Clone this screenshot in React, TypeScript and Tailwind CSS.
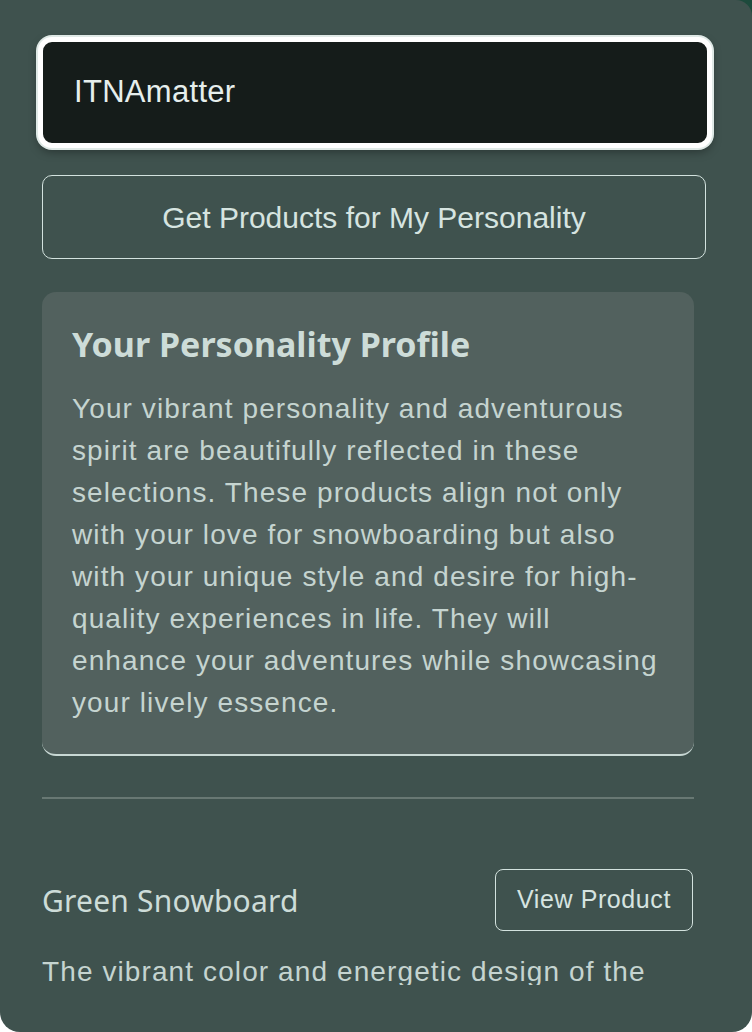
import React from "react";

export default function App() {
  const body = "font-['Liberation_Sans',Arial,sans-serif]";
  return (
    <div className="relative w-[752px] h-[1032px] bg-white overflow-hidden">
      <div className="absolute top-0 right-0 w-8 h-8 bg-[#1d4a3c]" />
      <div className="relative h-[1032px] bg-[#3f524e] rounded-tr-[16px] rounded-b-[20px] overflow-hidden pl-[42px] pt-[37px]">
        <div className="-ml-[4px] w-[674px] h-[111px] rounded-[14px] border-[5px] border-white bg-[#151c1a] shadow-[0_0_0_2px_#dfe9e6,0_4px_10px_rgba(0,0,0,0.35)] flex items-center pl-[31px]">
          <span className={`${body} text-[31px] text-[#e6eeec] tracking-[0.3px]`}>ITNAmatter</span>
        </div>
        <button className={`${body} mt-[27px] w-[664px] h-[84px] rounded-[10px] border-[1.5px] border-[#d3e2de] text-[30px] text-[#d6e4e0] flex items-center justify-center`}>
          Get Products for My Personality
        </button>
        <div className="w-[652px] h-[726px] overflow-hidden">
          <div className="mt-[33px] rounded-[14px] bg-[#52615e] border-b-2 border-[#c8d8d4] px-[30px] pt-[32px] pb-[30px]">
            <h2 className="font-['Noto_Sans',sans-serif] font-bold text-[34px] leading-[40px] text-[#cddcd8]">
              Your Personality Profile
            </h2>
            <p className={`${body} mt-[24px] text-[28px] leading-[42px] text-[#c5d4d0] tracking-[1.1px]`}>
              Your vibrant personality and adventurous spirit are beautifully reflected in these selections. These products align not only with your love for snowboarding but also with your unique style and desire for high-quality experiences in life. They will enhance your adventures while showcasing your lively essence.
            </p>
          </div>
          <div className="mt-[41px] h-[2px] bg-[#687873]" />
          <div className="mt-[70px] flex items-center justify-between">
            <span className="font-['Noto_Sans',sans-serif] text-[30px] text-[#cddcd8] tracking-[0.2px]">Green Snowboard</span>
            <button className={`${body} w-[198px] h-[62px] mr-[1px] rounded-[8px] border-[1.5px] border-[#d3e2de] text-[25px] text-[#d6e4e0] tracking-[0.6px]`}>
              View Product
            </button>
          </div>
          <p className={`${body} mt-[20px] text-[28px] leading-[42px] text-[#c5d4d0] tracking-[1.1px]`}>
            The vibrant color and energetic design of the Green Snowboard match your lively and adventurous personality perfectly.
          </p>
        </div>
      </div>
    </div>
  );
}
